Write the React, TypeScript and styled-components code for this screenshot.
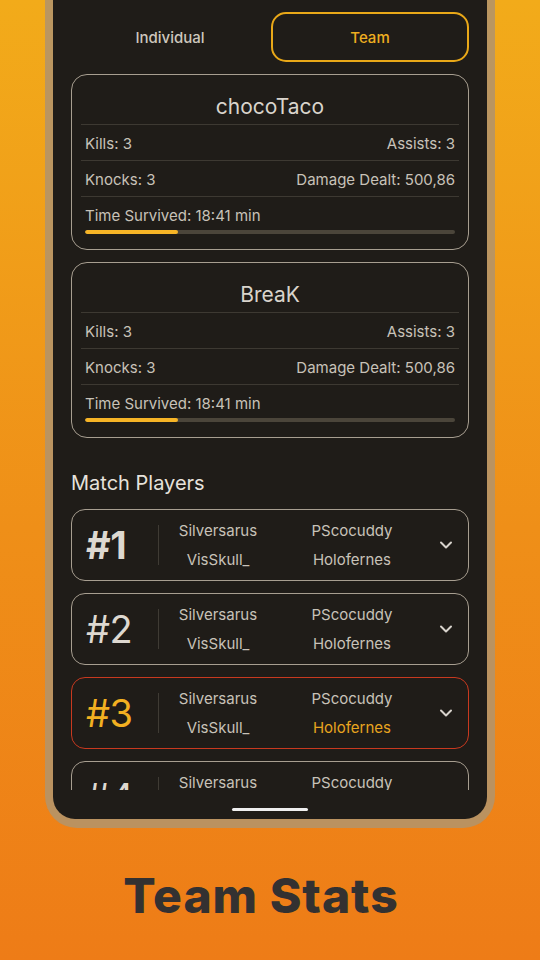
import React from 'react';
import styled, { createGlobalStyle } from 'styled-components';

const GlobalStyle = createGlobalStyle`
	* { box-sizing: border-box; }
	html, body { margin: 0; padding: 0; }
	body { font-family: Inter, "Noto Sans", sans-serif; }
`;

const Page = styled.div`
	width: 540px;
	height: 960px;
	overflow: hidden;
	background: linear-gradient(180deg, #f2ab1a 0%, #ef8f18 55%, #ee7c17 100%);
	display: flex;
	flex-direction: column;
`;

const Bezel = styled.div`
	margin: 0 45px;
	padding: 0 8px 9px;
	border-radius: 0 0 32px 32px;
	background: rgba(180, 148, 104, 0.9);
`;

const Screen = styled.div`
	height: 819px;
	background: #1f1c18;
	border-radius: 0 0 22px 22px;
	display: flex;
	flex-direction: column;
	overflow: hidden;
`;

const Scroll = styled.div`
	flex: 0 0 790px;
	overflow: hidden;
	padding: 12px 18px 0;
	display: flex;
	flex-direction: column;
`;

const Tabs = styled.div`
	display: grid;
	grid-template-columns: 1fr 1fr;
	gap: 2px;
	height: 50px;
	flex-shrink: 0;
`;

const Tab = styled.button<{ $active?: boolean }>`
	font-family: Inter, sans-serif;
	font-size: 15px;
	font-weight: 500;
	background: transparent;
	border: 2px solid ${(p) => (p.$active ? '#e9a818' : 'transparent')};
	border-radius: 15px;
	color: ${(p) => (p.$active ? '#eeae20' : '#cdc7bd')};
	cursor: pointer;
`;

const StatCard = styled.div`
	flex-shrink: 0;
	height: 176px;
	margin-top: 12px;
	border: 1px solid #a79e90;
	border-radius: 16px;
	padding: 0 9px;
	display: flex;
	flex-direction: column;
	&:first-of-type {
		margin-top: 13px;
	}
`;

const PlayerName = styled.div`
	height: 50px;
	padding-bottom: 5px;
	display: flex;
	align-items: flex-end;
	justify-content: center;
	font-size: 21px;
	color: #d9d4cc;
	border-bottom: 1px solid #3d3932;
`;

const StatRow = styled.div`
	height: 36px;
	padding: 2px 4px 0;
	display: flex;
	align-items: center;
	justify-content: space-between;
	font-size: 15px;
	color: #c8c2b8;
	border-bottom: 1px solid #3d3932;
`;

const TimeBlock = styled.div`
	padding: 9px 4px 0;
	font-size: 15px;
	color: #c8c2b8;
	line-height: 20px;
`;

const Track = styled.div`
	margin-top: 4px;
	height: 4px;
	border-radius: 2px;
	background: #4b453a;
	overflow: hidden;
`;

const Fill = styled.div`
	height: 100%;
	border-radius: 2px;
	background: #f6b426;
`;

const Heading = styled.h2`
	margin: 33px 0 14px;
	font-size: 20px;
	font-weight: 400;
	line-height: 24px;
	color: #e6e2dc;
	flex-shrink: 0;
`;

const PlayerList = styled.div`
	display: flex;
	flex-direction: column;
	gap: 12px;
`;

const PlayerCard = styled.div<{ $highlight?: boolean }>`
	flex-shrink: 0;
	height: 72px;
	border: 1px solid ${(p) => (p.$highlight ? '#c8391f' : '#a79e90')};
	border-radius: 14px;
	display: grid;
	grid-template-columns: 86px 1px 118px 150px 1fr;
	align-items: center;
`;

const Rank = styled.div<{ $bold?: boolean; $highlight?: boolean }>`
	padding-left: 14px;
	font-size: 38px;
	font-weight: ${(p) => (p.$bold ? 700 : 400)};
	color: ${(p) => (p.$highlight ? '#f2b021' : '#ddd8d0')};
	letter-spacing: -0.5px;
`;

const VLine = styled.div`
	height: 40px;
	background: #3f3b34;
`;

const NameCol = styled.div`
	display: flex;
	flex-direction: column;
	align-items: center;
	gap: 9px;
	font-size: 15px;
	line-height: 20px;
	color: #c8c2b8;
`;

const Name = styled.span<{ $highlight?: boolean }>`
	color: ${(p) => (p.$highlight ? '#e8a51f' : 'inherit')};
`;

const Chevron = styled.div`
	display: flex;
	justify-content: center;
	padding-right: 4px;
	color: #d8d3cc;
`;

const HomeArea = styled.div`
	flex: 1;
	display: flex;
	justify-content: center;
	padding-top: 18px;
`;

const HomeBar = styled.div`
	width: 76px;
	height: 3px;
	border-radius: 2px;
	background: #efefef;
`;

const Title = styled.h1`
	margin: 0;
	flex: 1;
	display: flex;
	align-items: center;
	justify-content: center;
	padding: 2px 18px 0 0;
	font-family: Inter, sans-serif;
	font-size: 48px;
	font-weight: 800;
	letter-spacing: 1px;
	color: #333131;
`;

const stats = [
	{ name: 'chocoTaco', kills: 3, assists: 3, knocks: 3, damage: '500,86', time: '18:41', pct: 25 },
	{ name: 'BreaK', kills: 3, assists: 3, knocks: 3, damage: '500,86', time: '18:41', pct: 25 },
];

const players = [1, 2, 3, 4];

const ChevronIcon = () => (
	<svg width="14" height="14" viewBox="0 0 14 14" fill="none">
		<path d="M2 4.5 L7 9.5 L12 4.5" stroke="currentColor" strokeWidth="2" strokeLinecap="round" strokeLinejoin="round" />
	</svg>
);

export default function App() {
	return (
		<>
			<GlobalStyle />
			<Page>
				<Bezel>
					<Screen>
						<Scroll>
							<Tabs>
								<Tab>Individual</Tab>
								<Tab $active>Team</Tab>
							</Tabs>
							{stats.map((s) => (
								<StatCard key={s.name}>
									<PlayerName>{s.name}</PlayerName>
									<StatRow>
										<span>Kills: {s.kills}</span>
										<span>Assists: {s.assists}</span>
									</StatRow>
									<StatRow>
										<span>Knocks: {s.knocks}</span>
										<span>Damage Dealt: {s.damage}</span>
									</StatRow>
									<TimeBlock>
										Time Survived: {s.time} min
										<Track>
											<Fill style={{ width: `${s.pct}%` }} />
										</Track>
									</TimeBlock>
								</StatCard>
							))}
							<Heading>Match Players</Heading>
							<PlayerList>
								{players.map((n) => {
									const hl = n === 3;
									return (
										<PlayerCard key={n} $highlight={hl}>
											<Rank $bold={n === 1} $highlight={hl}>#{n}</Rank>
											<VLine />
											<NameCol>
												<Name>Silversarus</Name>
												<Name>VisSkull_</Name>
											</NameCol>
											<NameCol>
												<Name>PScocuddy</Name>
												<Name $highlight={hl}>Holofernes</Name>
											</NameCol>
											<Chevron>
												<ChevronIcon />
											</Chevron>
										</PlayerCard>
									);
								})}
							</PlayerList>
						</Scroll>
						<HomeArea>
							<HomeBar />
						</HomeArea>
					</Screen>
				</Bezel>
				<Title>Team Stats</Title>
			</Page>
		</>
	);
}
